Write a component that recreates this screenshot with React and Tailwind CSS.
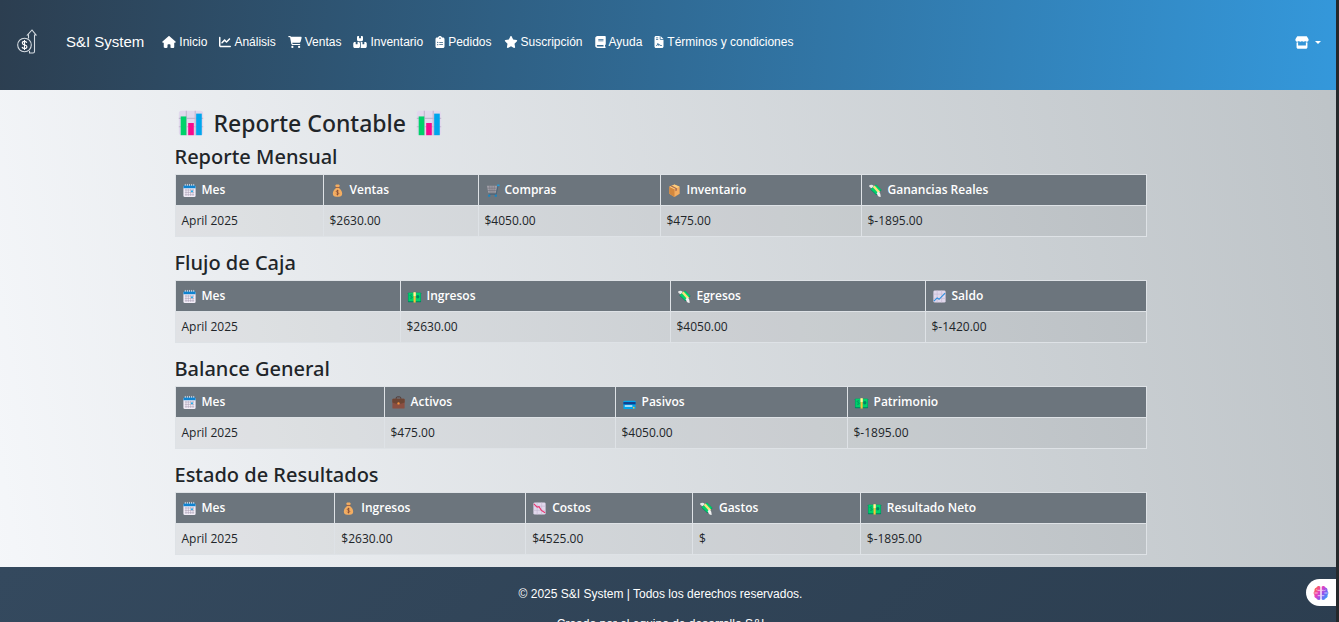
import React from "react";
import {
  FaHouse,
  FaChartLine,
  FaCartShopping,
  FaBoxesStacked,
  FaClipboardList,
  FaStar,
  FaBook,
  FaFileContract,
  FaStore,
} from "react-icons/fa6";

const links = [
  { label: "Inicio", Icon: FaHouse, size: "h-3 w-[14px]" },
  { label: "Análisis", Icon: FaChartLine, size: "h-3 w-3" },
  { label: "Ventas", Icon: FaCartShopping, size: "h-3 w-[14px]" },
  { label: "Inventario", Icon: FaBoxesStacked, size: "h-3 w-[14px]" },
  { label: "Pedidos", Icon: FaClipboardList, size: "h-3 w-[10px]" },
  { label: "Suscripción", Icon: FaStar, size: "h-3 w-[14px]" },
  { label: "Ayuda", Icon: FaBook, size: "h-3 w-[11px]" },
  { label: "Términos y condiciones", Icon: FaFileContract, size: "h-3 w-[10px]" },
];

const Sheet = () => (
  <>
    <rect x="3" y="3" width="26" height="26" rx="3" fill="#e1d8ec" />
    <path d="M3 11h26M3 20h26M11 3v26M20.500 3v26" stroke="#c3b7d0" strokeWidth="1.200" />
  </>
);

const drawings = {
  bars: (
    <>
      <Sheet />
      <rect x="5" y="9" width="6" height="20" fill="#00d26a" />
      <rect x="13" y="16" width="6" height="13" fill="#f70a8d" />
      <rect x="21.500" y="6" width="6" height="23" fill="#00a6ed" />
    </>
  ),
  calendar: (
    <>
      <rect x="3" y="6" width="26" height="24" rx="3" fill="#f3eef8" />
      <path d="M3 11V8a3 3 0 0 1 3-3h20a3 3 0 0 1 3 3v3z" fill="#0f83d0" />
      <path d="M7 2v4M11.500 2v4M16 2v4M20.500 2v4M25 2v4" stroke="#c9d6e6" strokeWidth="2" />
      <path d="M6 15h20M6 20h20M6 25h20M8.500 12.500v15M13.500 12.500v15M18.500 12.500v15M23.500 12.500v15" stroke="#a79db3" strokeWidth="1.200" />
      <rect x="19.500" y="16" width="3.500" height="3.500" fill="#00a6ed" />
    </>
  ),
  bag: (
    <>
      <path d="M13 3h6l2 3-2.500 4c4.500 3 7.500 8 7.500 13 0 4-3 6.500-7 6.500h-6c-4 0-7-2.500-7-6.500 0-5 3-10 7.500-13L11 6z" fill="#f3ad61" />
      <path d="M12 9.500h8" stroke="#8c5543" strokeWidth="1.800" />
      <path d="M18.600 17.500c-.6-1-1.500-1.400-2.600-1.400-1.500 0-2.600.8-2.600 2 0 2.800 5.300 1.200 5.300 4.200 0 1.300-1.200 2.200-2.700 2.200s-2.400-.6-2.800-1.700M16 14.500v12" fill="none" stroke="#7d4533" strokeWidth="1.600" />
    </>
  ),
  cart: (
    <>
      <path d="M4 6h22l-3 15H7z" fill="#a09ea6" />
      <path d="M5 11h19M6 16h18M10 6l1 15M15 6v15M20 6l-1 15" stroke="#6a6772" strokeWidth="1" />
      <path d="M28 5l-4 19H9" fill="none" stroke="#46637c" strokeWidth="1.800" />
      <path d="M26 5h5" stroke="#1c9ee0" strokeWidth="3.500" />
      <circle cx="9" cy="27" r="2.500" fill="#1686c4" />
      <circle cx="23" cy="27" r="2.500" fill="#1686c4" />
    </>
  ),
  box: (
    <>
      <path d="M16 3l11 5v15l-11 7-11-7V8z" fill="#f3ad61" />
      <path d="M5 8l11 5.500V30L5 23z" fill="#d3883e" />
      <path d="M16 3l11 5-11 5.500L5 8z" fill="#ffce7c" />
      <path d="M10 5.500l11 5.500v5l-3 1.500v-5L7.500 7z" fill="#a56953" />
    </>
  ),
  wings: (
    <>
      <path d="M2 6c3-3 7-3 10 0l-3 6C6 11 3 9 2 6z" fill="#e6e6e6" />
      <path d="M5 14L17 3l12 12-11 11z" fill="#008463" />
      <path d="M6 13.500L17 3.500l11 11-10 10z" fill="#00d26a" />
      <path d="M10 8.500l4-3 12 13-4 3.500z" fill="#f9e27d" />
      <path d="M21 18c4 1 6 4 6 12-4 0-7-2-8-8z" fill="#f0f0f0" />
    </>
  ),
  cash: (
    <>
      <rect x="2" y="8" width="28" height="20" rx="1" fill="#008463" />
      <rect x="3" y="8" width="26" height="18" fill="#00d26a" />
      <path d="M11 13c-3-1.500-4.500 0-4 1.500.6 1.700 4 1.200 4 3.500 0 2-3 2.500-4.500 1" fill="none" stroke="#008463" strokeWidth="1.700" />
      <circle cx="23" cy="16.500" r="3.500" fill="#008463" />
      <rect x="14" y="7" width="4.500" height="22" fill="#f9c23c" />
      <rect x="14" y="7" width="4.500" height="8" fill="#fff2a8" />
    </>
  ),
  up: (
    <>
      <Sheet />
      <path d="M4 26l7-7 4 3 13-13" fill="none" stroke="#2b8fe0" strokeWidth="2.400" />
    </>
  ),
  down: (
    <>
      <Sheet />
      <path d="M4 6l7 7 4-1 5 8 8 5" fill="none" stroke="#e8336d" strokeWidth="2.400" />
    </>
  ),
  briefcase: (
    <>
      <path d="M11 9V6.500C11 5 12 4 13.500 4h5C20 4 21 5 21 6.500V9" fill="none" stroke="#4e3530" strokeWidth="2" />
      <rect x="3" y="8" width="26" height="21" rx="2" fill="#8b4f41" />
      <path d="M3 10a2 2 0 0 1 2-2h22a2 2 0 0 1 2 2v6c-8 4-18 4-26 0z" fill="#6d4534" />
      <circle cx="16" cy="18" r="2.500" fill="#f3913e" />
    </>
  ),
  card: (
    <>
      <rect x="3" y="12" width="26" height="18" rx="2" fill="#00a6ed" />
      <rect x="3" y="15" width="26" height="5" fill="#103f8f" />
      <rect x="6" y="22" width="16" height="3" fill="#e6f4ff" />
      <circle cx="25" cy="27" r="1.800" fill="#f9c23c" />
    </>
  ),
};

function Emoji({ name, className }) {
  return (
    <svg viewBox="0 0 32 32" className={className} aria-hidden="true">
      {drawings[name]}
    </svg>
  );
}

const reports = [
  {
    title: "Reporte Mensual",
    columns: [
      ["calendar", "Mes", 148, "April 2025"],
      ["bag", "Ventas", 155, "$2630.00"],
      ["cart", "Compras", 182, "$4050.00"],
      ["box", "Inventario", 201, "$475.00"],
      ["wings", "Ganancias Reales", 285, "$-1895.00"],
    ],
  },
  {
    title: "Flujo de Caja",
    columns: [
      ["calendar", "Mes", 225, "April 2025"],
      ["cash", "Ingresos", 270, "$2630.00"],
      ["wings", "Egresos", 255, "$4050.00"],
      ["up", "Saldo", 221, "$-1420.00"],
    ],
  },
  {
    title: "Balance General",
    columns: [
      ["calendar", "Mes", 209, "April 2025"],
      ["briefcase", "Activos", 231, "$475.00"],
      ["card", "Pasivos", 232, "$4050.00"],
      ["cash", "Patrimonio", 299, "$-1895.00"],
    ],
  },
  {
    title: "Estado de Resultados",
    columns: [
      ["calendar", "Mes", 160, "April 2025"],
      ["bag", "Ingresos", 191, "$2630.00"],
      ["down", "Costos", 167, "$4525.00"],
      ["wings", "Gastos", 168, "$"],
      ["cash", "Resultado Neto", 286, "$-1895.00"],
    ],
  },
];

function Report({ title, columns }) {
  const total = columns.reduce((sum, column) => sum + column[2], 0);
  return (
    <section className="mb-[13px] last:mb-3">
      <h2 className="mb-[5px] font-['Noto_Sans','Open_Sans',sans-serif] text-[20px] leading-[25px] font-medium">{title}</h2>
      <table aria-label={title} className="w-full table-fixed border-collapse text-left text-[12px] leading-[18px]">
        <colgroup>
          {columns.map(([, label, weight]) => (
            <col key={label} style={{ width: `${(weight / total) * 100}%` }} />
          ))}
        </colgroup>
        <thead>
          <tr>
            {columns.map(([icon, label]) => (
              <th key={label} scope="col" className="border border-[#dee2e6] bg-[#6c757d] p-[6px] font-semibold text-white">
                <span className="flex items-center gap-[5px]">
                  <Emoji name={icon} className="size-[15px]" />
                  {label}
                </span>
              </th>
            ))}
          </tr>
        </thead>
        <tbody>
          <tr>
            {columns.map(([, label, , value]) => (
              <td key={label} className="border border-[#dee2e6] bg-black/5 p-[6px]">
                {value}
              </td>
            ))}
          </tr>
        </tbody>
      </table>
    </section>
  );
}

function Logo() {
  return (
    <svg viewBox="0 0 20 26" className="h-[26px] w-5" fill="none" stroke="#d5dbe1" strokeWidth="1.100" aria-hidden="true">
      <circle cx="7.500" cy="16" r="6.800" />
      <path d="M9.800 13.800c-.4-1-1.200-1.400-2.300-1.400-1.300 0-2.200.7-2.200 1.700 0 2.400 4.600 1.100 4.600 3.600 0 1.100-1 1.800-2.400 1.800-1.200 0-2.100-.5-2.500-1.500M7.500 11v10" stroke="#fff" strokeWidth="1.100" />
      <path d="M11.500 9.500V6H10.500l4.500-5 4 5h-1.500v16.500a1.500 1.500 0 0 1-1.500 1.500h-3.500v-2" />
    </svg>
  );
}

function Brain() {
  return (
    <svg viewBox="0 0 24 24" className="size-4" aria-hidden="true">
      <defs>
        <linearGradient id="brain" x1="0" y1="0.200" x2="1" y2="0.900">
          <stop offset="0" stopColor="#ff6a3d" />
          <stop offset=".35" stopColor="#e83fc0" />
          <stop offset=".65" stopColor="#7c5cf5" />
          <stop offset="1" stopColor="#22b8f5" />
        </linearGradient>
      </defs>
      <path
        fill="url(#brain)"
        d="M11 2.500v19c-1 1.500-5 1.300-6-1.500-2.500-.5-3.500-3-2.700-5C.5 13.500.5 10.500 2.300 9 1.800 6.500 3 4.500 5 4.200 6 1.200 10 .8 11 2.500zM13 2.500v19c1 1.500 5 1.300 6-1.500 2.500-.5 3.500-3 2.700-5 1.800-1.500 1.800-4.500 0-6 .5-2.500-.7-4.500-2.700-4.800-1-3-5-3.400-6-1.700z"
      />
      <path d="M11 8H7.500M2 12h5M11 16H7M5 7l2 1M13 8h3M22 12h-5M13 16h4M19 7l-2 2" stroke="#fff" strokeWidth="1" fill="none" />
    </svg>
  );
}

export default function App() {
  return (
    <div className="flex h-screen border-r-[3px] border-[#25282b] font-['Liberation_Sans',Arial,sans-serif]">
      <div className="flex min-w-0 flex-1 flex-col overflow-y-auto bg-[linear-gradient(80deg,#f5f7fa,#bdc3c7)] [scrollbar-width:none]">
        <header className="flex min-h-[90px] shrink-0 items-center bg-[linear-gradient(95deg,#2c3e50,#3498db)] pr-[15px] pb-[6px] pl-[17px] text-white">
          <a href="#inicio" aria-label="S&I System" className="mr-[29px]">
            <Logo />
          </a>
          <a href="#inicio" className="mr-[18px] text-[15px] leading-5">S&amp;I System</a>
          <nav className="flex flex-1 flex-wrap items-center gap-x-3 text-[12px] leading-4">
            {links.map(({ label, Icon, size }) => (
              <a key={label} href="#seccion" className="flex items-center gap-[3px]">
                <Icon className={size} aria-hidden="true" />
                {label}
              </a>
            ))}
          </nav>
          <button type="button" aria-label="Tienda" className="flex items-center gap-[6px]">
            <FaStore className="h-[13px] w-[14px]" />
            <span className="border-x-[3px] border-t-[3px] border-x-transparent border-t-white" />
          </button>
        </header>

        <main className="flex-1 pt-[18px] pr-[15px] font-['Open_Sans','Noto_Sans',sans-serif] text-[#212529]">
          <div className="mx-auto w-full max-w-[972px]">
            <h1 className="mb-[6px] flex items-center gap-2 px-[1px] font-['Noto_Sans','Open_Sans',sans-serif] text-[23px] leading-7 font-medium">
              <Emoji name="bars" className="size-[30px]" />
              Reporte Contable
              <Emoji name="bars" className="size-[30px]" />
            </h1>
            {reports.map((report) => (
              <Report key={report.title} {...report} />
            ))}
          </div>
        </main>

        <footer className="shrink-0 bg-[linear-gradient(135deg,#34495e,#2c3e50)] py-[18px] pr-[15px] text-center text-[12px] leading-[18px] text-white">
          <p className="mb-3">© 2025 S&amp;I System | Todos los derechos reservados.</p>
          <p>Creado por el equipo de desarrollo S&amp;I</p>
        </footer>
      </div>

      <button
        type="button"
        aria-label="Asistente"
        className="fixed right-[3px] bottom-4 flex h-[27px] w-[30px] items-center justify-center rounded-l-full bg-white"
      >
        <Brain />
      </button>
    </div>
  );
}
